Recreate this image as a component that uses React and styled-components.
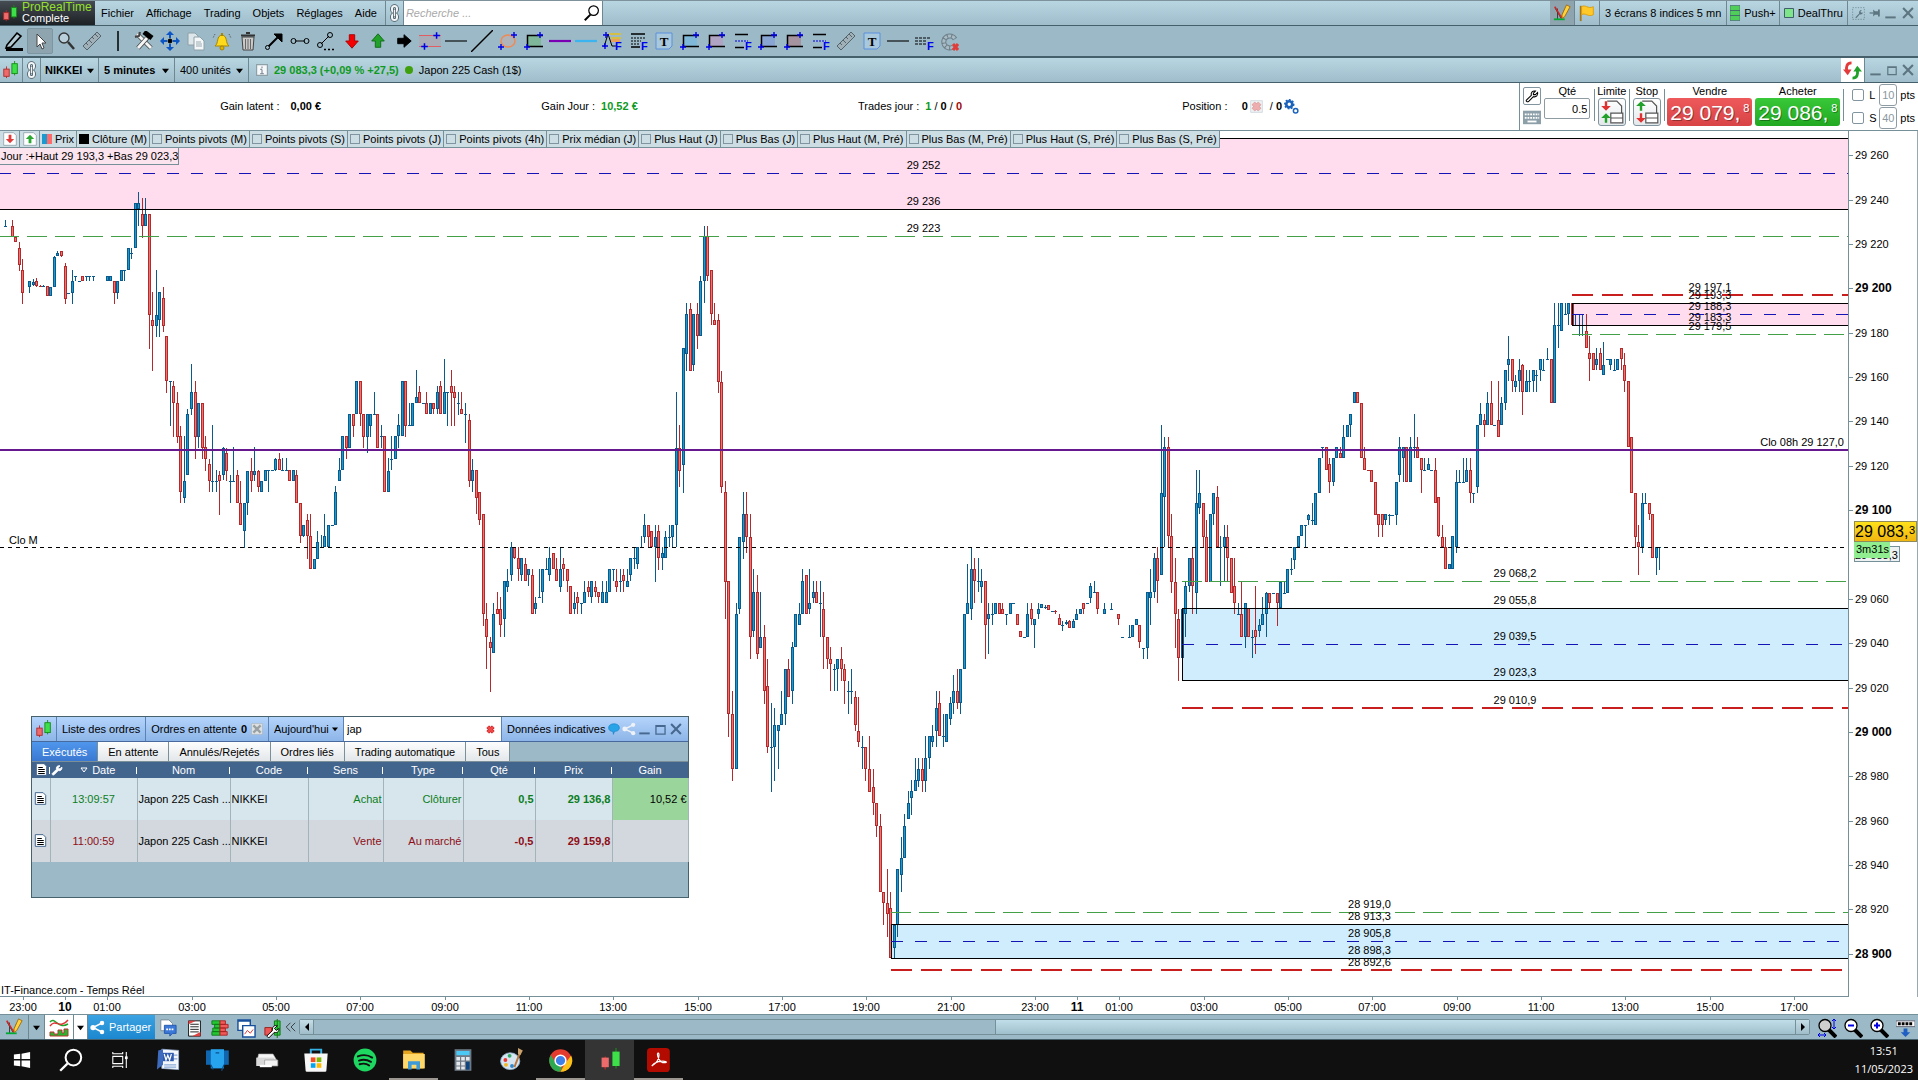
import React, { useState } from "react";
import styled, { createGlobalStyle } from "styled-components";

const GlobalStyle = createGlobalStyle`
  * {
    box-sizing: border-box;
  }
  body {
    margin: 0;
    background: #fff;
  }
  body, button, input, select, table {
    font-family: "Liberation Sans", Arial, sans-serif;
    font-size: 11px;
    color: #000;
  }
  button, input, select {
    margin: 0;
    padding: 0;
    border: 0;
    border-radius: 0;
    background: none;
    outline: none;
  }
`;

/* ---------- chart data ---------- */

// One bar: u/d (up or down) then high, body top, body bottom, low.
// A single number is a flat bar, "." is a missing one. Values are thirds of a pixel under "top".
const SESSIONS = [
  {
    start: 0,
    top: 49,
    bars: `u120,138,138,138 . d120,138,172,172 d172,172,187,187 d187,205,254,272 d237,270,338,371 . u303,303,322,338
    u297,306,314,318 d293,303,318,322 d316,317,317,322 u316,317,319,319 d317,317,347,347 u322,322,347,347 u228,232,322,322
    u214,220,227,227 d213,213,227,230 d250,259,356,371 u338 u270,303,338,371 u287,288,288,303 u304 d287,287,303,303
    u287,288,288,303 u287,288,288,303 u287,288,288,303 . . . u287,287,303,303 u287,287,303,303 d303,303,338,371
    u303,303,338,356 u271,271,303,303 u270,271,271,303 u205,205,271,271 u205,219,219,238 u70,70,205,205 u37,70,87,138
    d54,102,138,173 u54,102,138,138 d102,102,404,506 d337,420,437,572 u270,404,437,470 u336,337,420,470 d321,354,437,456
    d468,468,604,638 u604,604,604,738 d604,618,670,770 d636,670,770,788 d738,768,937,970 u768,904,953,970 u688,702,886,886
    u552,636,688,704 d604,637,770,836 u670,670,770,803 d670,670,803,836 d768,802,836,872 d836,853,904,937 u736,904,904,937
    u870,904,904,937 d872,886,904,1005 u800,803,886,900 d803,820,872,904 u886,904,904,970 u802,904,904,904 d870,886,970,970
    d903,970,1036,1036 u970,970,1054,1103 u872,872,970,1005 d834,872,904,937 u802,872,886,904 d870,872,920,937
    u904,904,937,937 u870,870,904,904 u870,870,870,937 u870 u834,836,870,872 d820,836,870,870 u834,870,870,870
    u834,870,870,870 d870,870,904,904 u870,870,904,904 d870,886,970,970 d970,970,1069,1088 u1036,1036,1069,1070
    d1003,1020,1069,1136 d1003,1069,1168,1168 u1136,1136,1168,1168 u1053,1086,1136,1136 u1066,1102,1102,1102
    u1003,1069,1102,1102 u1036,1036,1102,1102 u1036 u918,937,1036,1036 u834,870,904,904 u768,768,870,870 d768,768,803,836
    u702,702,803,803 d702,702,738,770 u604,604,702,702 d604,604,702,738 d702,702,770,803 u702,702,770,820 u702,702,738,770
    u636,702,702,702 d702,702,803,803 u736,768,768,803 d768,768,937,937 u834,872,937,937 u768,836,836,870 u768,768,836,836
    u702,736,768,803 u604,604,768,768 d604,604,738,770 u668,736,736,738 u670,670,738,738 u570,652,670,670 d618,636,670,670
    u670 d636,670,702,702 u670,670,702,702 d670,670,688,702 u618,636,688,702 d604,618,702,702 u537,636,702,702
    u636,636,636,738 d570,618,638,738 d618,637,653,738 u636,670,670,704 d637,688,702,702 u668,702,702,788 d702,720,904,920
    u836,870,904,937 d870,870,953,1003 d937,937,1020,1036 d1003,1003,1303,1338 d1268,1318,1370,1468 d1370,1387,1403,1535
    u1268,1303,1420,1420 d1236,1286,1303,1303 d1252,1286,1336,1370 u1203,1203,1318,1370 u1168,1203,1220,1236
    u1086,1102,1186,1203 d1102,1102,1135,1136 d1102,1135,1168,1203 u1135,1135,1186,1203 d1135,1152,1203,1203
    u1168,1168,1186,1218 d1168,1186,1303,1303 u1252,1270,1286,1303 u1168,1252,1252,1252 u1168,1168,1236,1270
    u1135,1168,1168,1168 u1102,1135,1186,1203 d1118,1120,1168,1168 d1135,1168,1203,1203 u1102,1168,1220,1236
    d1135,1152,1168,1203 d1168,1168,1203,1236 d1218,1218,1303,1303 u1236,1270,1286,1303 d1236,1252,1270,1303
    u1270,1270,1270,1303 u1203,1236,1270,1270 d1203,1220,1236,1252 u1203,1203,1252,1268 d1203,1220,1236,1252
    d1236,1236,1252,1270 u1203,1236,1270,1270 u1203,1236,1270,1270 u1168,1168,1236,1236 u1168,1168,1168,1203
    d1168,1203,1220,1236 u1168,1203,1203,1236 d1168,1186,1203,1236 u1168,1203,1220,1220 u1135,1135,1186,1203
    u1102,1135,1135,1168 u1102,1102,1152,1168`,
  },
  {
    start: 181,
    top: 319,
    bars: `u258,292,292,292 u192,226,260,278 d226,226,260,292 d244,244,292,292 u226,260,292,395 d226,244,325,360
    u292,310,325,360 u244,260,325,325 u226,260,260,292 u226,226,260,292 u-174,-7,226,292 d-75,-7,62,110 u-305,-305,44,128
    u-441,-407,-289,-238 d-441,-423,-238,-238 u-407,-407,-256,-238 d-441,-407,-341,-304 u-523,-507,-341,-341
    u-672,-641,-507,-440 d-672,-641,-523,-507 d-540,-540,-407,-374 d-441,-390,-374,-374 d-407,-390,-205,-171
    d-238,-205,110,128 d94,127,395,508 d394,394,793,860 d724,793,958,992 u460,493,958,958 u260,260,476,493
    u127,192,277,326 d127,192,260,310 d192,260,560,627 u358,427,542,560 d376,427,611,627 u427,560,593,593
    d526,560,724,761 d626,709,892,908 u760,892,892,1025 u775,826,892,992 u826,826,842,958 u724,793,826,826
    u658,658,793,826 d626,658,742,742 u577,592,724,761 u493,493,592,592 u460,493,526,526 u358,394,493,493
    d376,376,493,493 u358,460,476,493 u394,427,443,460 d394,427,460,460 u394,460,460,560 d427,476,560,658
    d560,560,626,658 d592,626,643,724 u643,658,658,724 u626,626,658,724 d592,626,658,692 d643,658,692,761
    u692,724,724,793 u658,724,724,761 d724,742,826,842 d742,842,875,892 u858,892,892,958 d892,892,958,992
    d858,958,1025,1025 d958,1010,1058,1094 d1058,1058,1127,1160 d1092,1127,1325,1325 d1325,1325,1358,1424
    d1258,1358,1391,1460 d1325,1375,1525,1525 u1424,1424,1493,1525 u1258,1258,1424,1460 u1160,1225,1276,1325
    u1092,1127,1225,1225 u1024,1058,1108,1108 u990,1024,1043,1094 u925,990,1024,1024 u925,958,992,1010 d925,958,992,1025
    u858,925,992,1025 u858,858,925,958 u825,858,875,892 u724,775,842,892 d724,760,858,858 u793,858,858,892
    u793,793,875,875 u742,760,808,826 u675,724,760,793 d658,724,760,777 u658,658,760,793 u493,493,658,658
    u342,460,493,493 u292,358,476,510 d325,358,394,460 u325,394,394,427 u358,394,410,460 d394,394,526,626
    u460,493,508,611 u460,493,493,526 u460,460,493,493 d460,460,493,493 d460,476,493,493 u493,493,493,526
    u460,460,493,493 u460 d493,493,526,526 d542,542,560,560 u560 u460,493,560,560 d460,476,508,526 u508,508,526,593
    u460,476,493,508 u463,463,474,474 u466,470,470,476 d466,466,480,480 u482 d480,482,486,492 d493,504,526,526
    u514,524,524,542 u510,517,521,524 d510,514,535,535 u508,514,535,535 u476,493,510,510 u476,476,493,493
    d460,460,476,493 u460 u400,409,443,460 u394,427,427,427 d427,427,476,493 . u460,476,493,493 . u460,476,476,476 .
    d493,493,508,526 u560 . u526,560,560,560 u526,526,560,560 u508,508,526,526 d526,526,576,593 u593,593,593,626
    u427,427,593,626 u358,427,443,526 u310,325,427,443 d292,325,394,460`,
  },
  {
    start: 329,
    top: 129,
    bars: `u495,698,945,945 u530,562,712,860 d530,562,828,860 d762,828,965,998 d895,965,1063,1163 d1046,1078,1195,1262
    u1046,1046,1195,1195 u965,978,1063,1130 u895,895,978,996 d860,895,978,1063 u630,730,998,1063 u630,698,745,762
    d730,730,830,860 d780,830,965,965 u762,762,965,965 u698,698,762,795 d678,712,862,862 u828,862,862,978
    u796,830,862,965 d796,830,895,965 d895,895,998,998 d895,978,1030,1063 u1030,1063,1063,1063 d965,1063,1130,1130
    u1030,1030,1130,1163 d1045,1045,1130,1130 u1110,1130,1130,1195 d978,1110,1130,1182 u1078,1096,1112,1130
    u1012,1063,1096,1096 u996,998,1063,1130 d998,998,1030,1046 u998 d998,998,1030,1098 u965,965,1045,1045
    u965,998,998,998 u928,928,998,998 u895,928,928,945 u862,862,900,928 u828,828,862,862 u796,796,828,828
    u796,796,796,860 u762,764,780,796 u730,780,780,796 u698,698,796,796 u595,595,698,698 u562,562,562,595
    d562,562,630,630 d595,612,665,698 u595,595,665,678 u562,562,595,595 d562,580,595,595 u495,530,595,595
    u495,495,530,530 u462,462,495,530 u397,397,430,430 d397,397,430,430 d430,430,595,595 d562,595,630,630 d630
    d630,630,665,665 d665,665,765,765 d762,762,796,830 d762,762,796,830 u762,762,780,796 u762,764,764,796 u764
    u665,665,764,796 u530,562,645,665 u562,562,595,665 d562,562,665,665 u530,562,665,665 u462,562,562,595
    d530,562,595,595 d595,595,630,698 u595,630,630,630 u595,612,630,630 u630 d595,630,730,730 d712,712,828,830
    d796,830,862,862 d830,862,928,928 u912,912,928,928 u828,828,928,928 u630,665,862,880 u630,665,665,665
    u595,665,665,665 u595,630,665,665 d595,630,698,730 u698,698,698,730 u495,495,680,698 u430,462,495,495
    d462,480,495,530 u397,430,495,495 d362,430,495,495 u495 d362,480,530,530 u412,430,495,495 u330,330,430,450
    u228,298,314,364 d298,298,364,397 u345,364,380,397 u298,330,364,397 d312,314,397,464 u330,364,397,397
    u330,364,364,397 u330,330,364,397 u330,345,345,397 u298,298,330,364 u298,330,330,330 u265,298,298,298
    d298,298,430,430 u130,195,430,430 u130,195,195,265 u130,130,214,214 u130,163,163,163 u130,130,163,195
    d130,130,195,195 u163,163,163,195 u163,163,163,228 u163,195,195,228 d163,214,265,265 d228,280,298,364
    d280,280,330,330 u265,298,314,330 d265,280,330,330 u247,314,345,345 u298 u298,298,314,330 u298,330,330,330
    u298,298,330,330 d265,265,298,330 d280,314,364,397 d364,364,562,562 d530,530,698,698 d698,698,830,862
    d796,846,862,946 u698,730,862,880 u698,730,730,730 d730,730,762,780 d762,762,895,895 u862,862,895,946
    u862,862,862,930`,
  },
];

const BAR_STEP = 3.513;

const CANDLES = SESSIONS.flatMap(({ start, top, bars }) =>
  bars
    .split(/\s+/)
    .map((bar, i) => {
      if (bar === ".") return null;
      const v = bar.slice(1).split(",").map((n) => Math.round(top + Number(n) / 3));
      const [high, open, close, low] = v.length === 1 ? [v[0], v[0], v[0], v[0]] : v;
      return { x: Math.round(4.8 + (start + i) * BAR_STEP), up: bar[0] === "u", high, open, close, low };
    })
    .filter(Boolean)
);

const priceY = (p) => Math.round(24.3 + (29260 - p) * 2.218);
const priceText = (p) => {
  const [int, dec] = String(p).split(".");
  return `${int.slice(0, 2)} ${int.slice(2)}${dec ? "," + dec : ""}`;
};

const ZONES = [
  { x: 0, top: 29268, bottom: 29235.6, fill: "#ffdcee" },
  { x: 1572, top: 29193.3, bottom: 29183.3, fill: "#ffdcee", side: true },
  { x: 1182, top: 29055.8, bottom: 29023.3, fill: "#cfedfd", side: true },
  { x: 891, top: 28913.3, bottom: 28898.3, fill: "#cfedfd", side: true },
];

const LINES = {
  green: { stroke: "#43a047", strokeWidth: 1, strokeDasharray: "20 8" },
  blue: { stroke: "#1414b4", strokeWidth: 1, strokeDasharray: "12 12" },
  red: { stroke: "#c81e1e", strokeWidth: 2, strokeDasharray: "21 9" },
};

const LEVELS = [
  { x: -1, price: 29252, kind: "blue" },
  { x: -1, price: 29236 },
  { x: -1, price: 29223.4, label: "29 223", kind: "green" },
  { x: 1572, price: 29197.1, kind: "red" },
  { x: 1572, price: 29193.3 },
  { x: 1572, price: 29188.3, kind: "blue" },
  { x: 1572, price: 29183.3 },
  { x: 1572, price: 29179.5, kind: "green" },
  { x: 1182, price: 29068.2, kind: "green" },
  { x: 1182, price: 29055.8 },
  { x: 1182, price: 29039.5, kind: "blue" },
  { x: 1182, price: 29023.3 },
  { x: 1182, price: 29010.9, kind: "red" },
  { x: 891, price: 28919, label: "28 919,0", kind: "green" },
  { x: 891, price: 28913.3 },
  { x: 891, price: 28905.8, kind: "blue" },
  { x: 891, price: 28898.3 },
  { x: 891, price: 28892.6, kind: "red" },
];

const PRICES = Array.from({ length: 19 }, (_, i) => 29260 - i * 20).filter((p) => p !== 29080);

const HOURS = Array.from({ length: 22 }, (_, i) => ({
  x: Math.round(23 + i * 84.33),
  label: `${String((23 + i * 2) % 24).padStart(2, "0")}:00`,
}));
const DAYS = [
  { x: 65, label: "10" },
  { x: 1077, label: "11" },
];

const INDICATORS = [
  "Points pivots (M)",
  "Points pivots (S)",
  "Points pivots (J)",
  "Points pivots (4h)",
  "Prix médian (J)",
  "Plus Haut (J)",
  "Plus Bas (J)",
  "Plus Haut (M, Pré)",
  "Plus Bas (M, Pré)",
  "Plus Haut (S, Pré)",
  "Plus Bas (S, Pré)",
];

/* ---------- layout ---------- */

const Screen = styled.div`
  display: flex;
  flex-direction: column;
  min-height: 100vh;
  overflow: hidden;
`;

const Bar = styled.div`
  display: flex;
  align-items: stretch;
  height: ${(p) => p.$h}px;
  background: linear-gradient(#b8d6e2, #9fbdca);
  border-top: ${(p) => (p.$top ? "1px solid #7d929b" : "0")};
  border-bottom: ${(p) => p.$line || 1}px solid #46606b;
`;

const Tools = styled(Bar)`
  padding-left: 1px;
  align-items: center;
  background: #9bb9c6;
`;

const Push = styled.div`
  flex: 1;
`;

const Cell = styled.div`
  display: flex;
  align-items: center;
  gap: ${(p) => p.$gap || 0}px;
  padding: 0 ${(p) => (p.$pad === undefined ? 5 : p.$pad)}px;
  border-right: 1px solid #6f8791;
  white-space: nowrap;
  background: ${(p) => p.$bg || "none"};
`;

const CellButton = styled(Cell).attrs({ as: "button", type: "button" })``;

const Logo = styled.div`
  display: flex;
  align-items: center;
  gap: 3px;
  width: 95px;
  padding-left: 2px;
  background: linear-gradient(#454c52, #1c2125);
  color: #fff;
  line-height: 11px;
  white-space: nowrap;
`;

const Brand = styled.span`
  display: block;
  font-size: 12px;
  color: #95e02c;
`;

const Menu = styled.nav`
  display: flex;
  padding-right: 2px;
  border-right: 1px solid #6f8791;
`;

const MenuItem = styled.button`
  padding: 0 6px;
`;

const Search = styled.label`
  display: flex;
  align-items: center;
  width: 199px;
  padding: 0 2px;
  background: #fff;
  border-right: 1px solid #6f8791;
`;

const SearchInput = styled.input`
  flex: 1;
  min-width: 0;
  &::placeholder {
    color: #a9a9a9;
    font-style: italic;
  }
`;

const ToolButton = styled.button`
  display: flex;
  align-items: center;
  justify-content: center;
  flex: none;
  width: 26px;
  height: 26px;
  border: 1px solid ${(p) => (p.$on ? "#7c96a2" : "transparent")};
  border-radius: 2px;
  background: ${(p) => (p.$on ? "#8ea5b0" : "none")};
`;

const PlainButton = styled.button`
  display: inline-flex;
  align-items: center;
  justify-content: center;
  width: ${(p) => p.$w || 16}px;
`;

const Picker = styled.select`
  appearance: none;
  font-weight: ${(p) => (p.$bold ? "bold" : "normal")};
`;

const Quote = styled.div`
  display: flex;
  align-items: center;
  gap: 6px;
  padding-left: 7px;
  white-space: nowrap;
  b {
    color: #0f9a1e;
  }
`;

const Dot = styled.i`
  width: 8px;
  height: 8px;
  border-radius: 50%;
  background: #3fa00c;
`;

const Info = styled.section`
  display: flex;
  height: 48px;
  border-bottom: 1px solid #76909a;
`;

const Stats = styled.div`
  display: flex;
  flex: 1;
  align-items: center;
  justify-content: space-evenly;
  padding-bottom: 1px;
  border-right: 1px solid #76909a;
`;

const Stat = styled.div`
  display: flex;
  align-items: center;
  gap: ${(p) => p.$gap || 6}px;
`;

const Green = styled.b`
  color: #0f9a1e;
`;

const DarkRed = styled.b`
  color: #a00a0a;
`;

const Ticket = styled.div`
  display: flex;
  padding: 0 3px;
`;

const TicketSide = styled.div`
  display: flex;
  flex-direction: column;
  gap: 3px;
  padding-top: 4px;
  margin-right: 3px;
`;

const SideButton = styled.button`
  display: flex;
  align-items: center;
  justify-content: center;
  width: 18px;
  height: 18px;
  border: ${(p) => (p.$flat ? "0" : "1px solid #8195a0")};
  border-radius: 2px;
`;

const Field = styled.label`
  display: flex;
  flex-direction: column;
  align-items: center;
  padding-top: 1px;
  margin-right: 4px;
  line-height: 14px;
`;

const QtyInput = styled.input`
  width: 46px;
  height: 21px;
  padding-right: 2px;
  border: 1px solid #8f9ba3;
  border-radius: 2px;
  text-align: right;
`;

const OrderGroup = styled.div`
  display: flex;
  flex-direction: column;
  align-items: center;
  width: 35px;
  padding-top: 1px;
  line-height: 14px;
  background: linear-gradient(#76909a, #76909a) left 6px / 1px 32px no-repeat;
`;

const OrderButton = styled.button`
  display: flex;
  align-items: center;
  justify-content: center;
  width: 28px;
  height: 28px;
  border: 1px solid #8195a0;
  border-radius: 3px;
  background: linear-gradient(#fff, #e3e8ea);
`;

const Deals = styled.div`
  display: flex;
  gap: 3px;
  padding: 1px 3px 0;
  line-height: 14px;
  background: linear-gradient(#76909a, #76909a) left 6px / 1px 32px no-repeat;
`;

const Deal = styled.div`
  display: flex;
  flex-direction: column;
  align-items: center;
`;

const DealButton = styled.button`
  display: flex;
  align-items: flex-start;
  justify-content: space-between;
  width: 85px;
  height: 28px;
  padding: 1px 3px 0;
  border-radius: 3px;
  background: ${(p) => (p.$buy ? "linear-gradient(#38c838, #22a922)" : "linear-gradient(#ee5a5c, #d84446)")};
  color: #fff;
  font-size: 21px;
  line-height: 27px;
  text-shadow: 1px 1px 0 rgba(0, 0, 0, 0.35);
  small {
    font-size: 11px;
    line-height: 18px;
  }
`;

const Guards = styled.div`
  display: flex;
  flex-direction: column;
  gap: 1px;
  padding-top: 1px;
  padding-left: 9px;
  background: linear-gradient(#76909a, #76909a) left 6px / 1px 32px no-repeat;
`;

const Guard = styled.div`
  display: flex;
  align-items: center;
  gap: 3px;
  label {
    display: flex;
    align-items: center;
    gap: 5px;
    width: 24px;
  }
`;

const Tick = styled.input`
  appearance: none;
  flex: none;
  width: ${(p) => p.$s}px;
  height: ${(p) => p.$s}px;
  border: 1px solid #8195a0;
  border-radius: ${(p) => p.$r || 0}px;
`;

const PtsInput = styled.input`
  width: 18px;
  height: 22px;
  border: 1px solid #8f9ba3;
  border-radius: 3px;
  color: #8b98a0;
  text-align: center;
`;

const Chart = styled.main`
  position: relative;
  display: grid;
  grid-template-columns: 1fr 69px;
  grid-template-rows: 1fr 17px;
  flex: 1;
  min-height: 780px;
`;

const Plot = styled.svg`
  display: block;
  width: 100%;
  height: 100%;
  min-width: 0;
  overflow: hidden;
  border-right: 1px solid #76909a;
  border-bottom: 1px solid #76909a;
  font-size: 11px;
`;

const PriceAxis = styled.svg`
  display: block;
  width: 100%;
  height: 100%;
  font-size: 11px;
`;

const TimeAxis = styled.svg`
  grid-column: 1 / 3;
  display: block;
  width: 100%;
  height: 100%;
  font-size: 11px;
`;

const Overlay = styled.div`
  position: absolute;
  top: 0;
  left: 0;
`;

const Strip = styled.div`
  display: flex;
  height: 17px;
  border-bottom: 1px solid #76909a;
  background: #cddde4;
`;

const StripItem = styled.label`
  display: flex;
  align-items: center;
  gap: 3px;
  padding: 0 2px;
  border-right: 1px solid #76909a;
  white-space: nowrap;
`;

const StripButton = styled.button`
  display: flex;
  align-items: center;
  justify-content: center;
  width: 20px;
  border-right: 1px solid #76909a;
`;

const Swatch = styled.i`
  width: 10px;
  height: 10px;
  background: ${(p) => p.$c};
`;

const DayRange = styled.div`
  width: 179px;
  padding-left: 1px;
  line-height: 16px;
  border: solid #76909a;
  border-width: 0 1px 1px 0;
  background: #fbe4ee;
  white-space: nowrap;
`;

/* ---------- orders window ---------- */

const Orders = styled.section`
  position: absolute;
  left: 31px;
  top: 585px;
  width: 658px;
  height: 182px;
  border: 1px solid #48626d;
  background: #9bb9c6;
`;

const OrdersTitle = styled.header`
  display: flex;
  height: 25px;
  border-bottom: 1px solid #47699c;
  background: linear-gradient(#b4d4fb, #8db5e8);
`;

const OrdersCell = styled.div`
  display: flex;
  align-items: center;
  gap: ${(p) => p.$gap || 0}px;
  padding: 0 ${(p) => (p.$pad === undefined ? 5 : p.$pad)}px;
  border-right: 1px solid #5b82b5;
  white-space: nowrap;
`;

const FilterBox = styled.div`
  display: flex;
  align-items: center;
  width: 158px;
  padding: 0 3px;
  background: #fff;
  border-right: 1px solid #5b82b5;
`;

const WindowButtons = styled.div`
  display: flex;
  align-items: center;
  justify-content: space-between;
  flex: 1;
  padding: 0 5px;
  white-space: nowrap;
`;

const Tabs = styled.div`
  display: flex;
  height: 20px;
  border-bottom: 1px solid #7b8f99;
`;

const Tab = styled.button`
  padding: 0 10px;
  border-right: 1px solid #7b8f99;
  background: ${(p) => (p.$on ? "linear-gradient(#4f97ec, #3a78d2)" : "linear-gradient(#fdfdfd, #e3e7ea)")};
  color: ${(p) => (p.$on ? "#fff" : "#000")};
`;

const OrdersTable = styled.table`
  width: 100%;
  table-layout: fixed;
  border-collapse: collapse;
  th, td {
    padding: 0 1px;
    overflow: hidden;
    white-space: nowrap;
  }
  th {
    height: 16px;
    background: linear-gradient(#fff, #fff) right 5px / 1px 7px no-repeat #42658e;
    color: #fff;
    font-weight: normal;
  }
  th:last-child {
    background: #42658e;
  }
  td {
    height: 42px;
    border-right: 1px solid #a3b3ba;
    text-align: right;
  }
`;

const DateHead = styled.span`
  display: flex;
  align-items: center;
  gap: 4px;
`;

const OrderRow = styled.tr`
  background: ${(p) => (p.$buy ? "#d7e6ec" : "#d2d8de")};
  color: ${(p) => (p.$buy ? "#0b7d22" : "#8f0d17")};
`;

const Dark = styled.td`
  && {
    color: #000;
    text-align: left;
  }
`;

const GainCell = styled.td`
  && {
    color: #000;
    background: ${(p) => (p.$on ? "#9ad59b" : "none")};
  }
`;

const Centered = styled.td`
  && {
    text-align: center;
  }
`;

/* ---------- bottom ---------- */

const BottomBar = styled(Bar)`
  background: #9bb9c6;
  border-top: 1px solid #76909a;
`;

const Share = styled.button`
  display: flex;
  align-items: center;
  gap: 4px;
  width: 67px;
  padding-left: 2px;
  background: linear-gradient(#3ba3e2, #1c87cf);
  color: #fff;
`;

const Scroll = styled.div`
  display: flex;
  flex: 1;
  height: 16px;
  margin: 4px 4px 0 2px;
  border: 1px solid #76909a;
  border-radius: 2px;
`;

const ScrollButton = styled.button`
  display: flex;
  align-items: center;
  justify-content: center;
  width: 14px;
  background: linear-gradient(#c5dde6, #9fbdca);
  border: solid #76909a;
  border-width: 0 ${(p) => (p.$end ? 0 : 1)}px 0 ${(p) => (p.$end ? 1 : 0)}px;
`;

const Track = styled.div`
  display: flex;
  justify-content: flex-end;
  flex: 1;
`;

const Thumb = styled.div`
  width: 54%;
  border-left: 1px solid #76909a;
  background: linear-gradient(#c0dee9, #a0c0cd);
`;

const Taskbar = styled.footer`
  display: flex;
  height: 40px;
  margin-left: -3px;
  padding-right: 5px;
  background: #101010;
`;

const TaskButton = styled.button`
  display: flex;
  align-items: center;
  justify-content: center;
  flex: none;
  width: 49px;
  background: ${(p) => (p.$on ? "#343434" : "none")};
  box-shadow: ${(p) => (p.$open ? "inset 0 -2px #9c9690" : "none")};
`;

const Clock = styled.time`
  color: #fff;
  font-family: "Open Sans", "Noto Sans", sans-serif;
  font-size: 11px;
  line-height: 18px;
  padding-top: 2px;
  text-align: center;
`;

/* ---------- icons ---------- */

const Icon = ({ s = 20, h, box = 20, children }) => (
  <svg width={s} height={h || s} viewBox={`0 0 ${box} ${box}`} fill="none" stroke="#000" aria-hidden="true">
    {children}
  </svg>
);

const CandleLogo = ({ s = 18 }) => (
  <Icon s={s}>
    <path d="M5 6v13" stroke="#c22" />
    <rect x="2" y="9" width="6" height="8" fill="#ef6b6b" stroke="#b02a2a" />
    <path d="M14 0v16" stroke="#158a15" />
    <rect x="11" y="3" width="6" height="11" fill="#3ee04a" stroke="#158a15" />
  </Icon>
);

const Chain = () => (
  <svg width="11" height="18" viewBox="0 0 11 18" fill="none" aria-hidden="true">
    <g stroke="#46555c" strokeWidth="3.6">
      <rect x="3" y="2" width="5" height="6" rx="2.5" />
      <rect x="3" y="10" width="5" height="6" rx="2.5" />
    </g>
    <g stroke="#f2f6f8" strokeWidth="2">
      <rect x="3" y="2" width="5" height="6" rx="2.5" />
      <rect x="3" y="10" width="5" height="6" rx="2.5" />
    </g>
    <path d="M5.5 5v8" stroke="#46555c" strokeWidth="3" />
    <path d="M5.5 5.500v7" stroke="#f2f6f8" strokeWidth="1.5" />
  </svg>
);

const Down = ({ s = 7 }) => (
  <Icon s={s} box={8}>
    <path d="M0 2h8L4 7z" fill="#000" stroke="none" />
  </Icon>
);

const Minimize = ({ c = "#5d7580" }) => (
  <Icon s={13}>
    <path d="M2 16h16" stroke={c} strokeWidth="3" />
  </Icon>
);
const Maximize = ({ c = "#5d7580" }) => (
  <Icon s={13}>
    <path d="M3 4h14v13H3zM3 5h14" stroke={c} strokeWidth="2" />
  </Icon>
);
const Close = ({ c = "#5d7580" }) => (
  <Icon s={14}>
    <path d="M3 3l14 14M17 3L3 17" stroke={c} strokeWidth="3" />
  </Icon>
);

const RedCross = ({ s = 11, dim }) => (
  <Icon s={s}>
    {dim && <path d="M1 1h18v18H1z" fill="#eef3f5" stroke="#c3ced3" />}
    <g opacity={dim ? 0.4 : 1}>
      <path d="M5 5l10 10M15 5L5 15" stroke="#a81414" strokeWidth="7" />
      <path d="M5 5l10 10M15 5L5 15" stroke="#f04848" strokeWidth="5" />
    </g>
  </Icon>
);

const DrawIcon = () => (
  <Icon s={18}>
    <path d="M2 4l7 12 4-10M5 5v12" stroke="#333" />
    <path d="M2 3l8 13" stroke="#d22" strokeWidth="1.6" />
    <path d="M1 17h12" stroke="#0a3" strokeWidth="2" />
    <path d="M10 12l5-11 4 2-6 11-3 2z" fill="#ffd23c" stroke="#a36a10" />
  </Icon>
);

const Flag = () => (
  <Icon s={18}>
    <path d="M3 2v17" stroke="#a5761c" strokeWidth="2" />
    <path d="M4 3c4-3 7 3 13 0v9c-6 3-9-3-13 0z" fill="#ffc928" stroke="#d99b0b" />
  </Icon>
);

const Pages = () => (
  <Icon s={13}>
    <path d="M2 1h12l4 4v14H2z" fill="#fff" stroke="#42658e" strokeWidth="1.5" />
    <path d="M5 7h7M5 10h10M5 13h10M5 16h10" stroke="#000" strokeWidth="1.6" />
  </Icon>
);

const Wrench = ({ c = "#000", f = "none", s = 14 }) => (
  <Icon s={s}>
    <path
      d="M2 16l7-7c-1-4 2-7 6-6l-3 3v2h3l3-3c1 4-2 7-6 6l-7 7c-2 1-4-1-3-2z"
      stroke={c}
      fill={f}
      strokeWidth="1.5"
    />
  </Icon>
);

const ShareGlyph = ({ c = "#fff", s = 16 }) => (
  <Icon s={s}>
    <path d="M16 4L4 10l12 6" stroke={c} strokeWidth="2" />
    <g fill={c} stroke="none">
      <circle cx="4" cy="10" r="3.5" />
      <circle cx="16" cy="4" r="3" />
      <circle cx="16" cy="16" r="3" />
    </g>
  </Icon>
);

const plus = (x, y) => <path d={`M${x - 3} ${y}h6M${x} ${y - 3}v6`} stroke="#0000e6" strokeWidth="1.4" />;

const Letter = ({ x = 13, y = 19 }) => (
  <text x={x} y={y} fontSize="11" fontWeight="bold" fill="#0000f0" stroke="none">
    F
  </text>
);

const RectTool = ({ fill }) => (
  <Icon>
    <path d="M3 5h14v11H3z" fill={fill} stroke="none" />
    <path d="M19 4.500H3.500v11H19" stroke="#000" strokeWidth="1.5" />
    {plus(16, 4)}
    {plus(3, 16)}
  </Icon>
);

const RulerTool = () => (
  <Icon>
    <path d="M1 15L15 1l4 4L5 19z" fill="#9fb0b8" stroke="#55636b" />
    <path d="M4 12l2 2M7 9l3 3M10 6l2 2M13 3l3 3" stroke="#55636b" />
  </Icon>
);

const TextTool = () => (
  <Icon>
    <path d="M2 2h16v13l-3 3H2z" fill="#a9c8dc" stroke="#5b8fe0" />
    <text x="10" y="15" textAnchor="middle" fontSize="13" fontWeight="bold" fontFamily="Liberation Serif, serif" fill="#000" stroke="none">
      T
    </text>
  </Icon>
);

const LevelTool = () => (
  <Icon>
    <path d="M3 3.500h13M3 16.500h9" strokeWidth="1.5" />
    <path d="M3 10h13" stroke="#00d" strokeDasharray="2 1" />
    <Letter />
  </Icon>
);

const LineTool = ({ c = "#000", w = 1 }) => (
  <Icon s={22}>
    <path d="M0 10h20" stroke={c} strokeWidth={w} />
  </Icon>
);

const BlockArrow = ({ turn, fill, stroke }) => (
  <Icon s={18}>
    <path d="M7 3h6v7h4l-7 8-7-8h4z" fill={fill} stroke={stroke} transform={`rotate(${turn} 10 10)`} />
  </Icon>
);

const TOOLS = [
  ["Crayon", <Icon><path d="M3 14L13 2l4 3L7 16l-5 1z" strokeWidth="1.6" fill="#b4cad4" /><path d="M2 18.500h17" strokeWidth="3" /></Icon>],
  ["Pointeur", <Icon><path d="M7 3v13l3-3 2 5 2-1-2-5h4z" fill="#fff" stroke="#444" /></Icon>],
  ["Loupe", <Icon><circle cx="8" cy="7" r="5" fill="#b9d0da" stroke="#333" strokeWidth="1.3" /><path d="M12 11l6 7" stroke="#333" strokeWidth="2.500" /></Icon>],
  ["Règle", <RulerTool />],
  ["Séparateur", <Icon><path d="M10 0v20" strokeWidth="1.5" /></Icon>],
  ["Outils", <Icon><path d="M3 3l14 14" stroke="#444" strokeWidth="4.500" /><path d="M3 3l14 14" stroke="#f5f5f5" strokeWidth="3" /><path d="M15 5L4 17" stroke="#444" strokeWidth="4.500" /><path d="M13 7L4 17" stroke="#f5f5f5" strokeWidth="3" /><path d="M10 1l8 6" strokeWidth="5" /><path d="M1 6l4-1 1-4" stroke="#444" strokeWidth="2" /></Icon>],
  ["Déplacer", <Icon><g fill="#0b55c4" stroke="none"><path d="M10 0l4 4h-3v3H9V4H6zM10 20l4-4h-3v-3H9v3H6zM0 10l4-4v3h3v2H4v3zM20 10l-4-4v3h-3v2h3v3z" /></g><circle cx="10" cy="10" r="2" fill="#000" /></Icon>],
  ["Copier", <Icon><path d="M2 2h7l3 3v9H2z" fill="#dde7eb" stroke="#8ea0a8" /><path d="M8 6h6l4 4v9H8z" fill="#f4f7f8" stroke="#8ea0a8" /><path d="M10 11h5M10 13h6M10 15h6" stroke="#9aa9b0" /></Icon>],
  ["Alerte", <Icon><path d="M3 15c4-3 1-10 7-11 6 1 3 8 7 11z" fill="#ffd91c" stroke="#a88600" /><circle cx="10" cy="17" r="2" fill="#e2b400" stroke="#a88600" /><path d="M10 2v3" stroke="#a88600" strokeWidth="2" /><path d="M3 3L1 7M17 3l2 4" stroke="#555" strokeDasharray="1 1" /></Icon>],
  ["Supprimer", <Icon><path d="M4 6h12l-1 13H5z" fill="#c9c9c9" stroke="#444" /><path d="M7.500 8v10M10 8v10M12.500 8v10" stroke="#666" /><path d="M3 4.500h14M8 2h4" stroke="#333" strokeWidth="2" /></Icon>],
  ["Flèche", <Icon><path d="M3 17L14 6" strokeWidth="2" /><path d="M10 3h8v8z" fill="#000" /><circle cx="3.500" cy="16.500" r="2" fill="#9bb9c6" /></Icon>],
  ["Segment", <Icon><path d="M5 10h10" /><circle cx="3.500" cy="10" r="2.500" /><circle cx="16.500" cy="10" r="2.500" /></Icon>],
  ["Prolongement", <Icon><path d="M5 13l8-8" /><circle cx="14" cy="4" r="2.500" /><circle cx="4" cy="14" r="2.500" /><path d="M8 18.500h11" strokeWidth="1.5" strokeDasharray="2 2" /></Icon>],
  ["Baisse", <BlockArrow turn={0} fill="#f40000" stroke="#a80000" />],
  ["Hausse", <BlockArrow turn={180} fill="#21a02a" stroke="#0d6b14" />],
  ["Suite", <BlockArrow turn={270} fill="#000" stroke="#000" />],
  ["Canal", <Icon s={22}><path d="M0 5h20v10H0z" fill="#a9adb8" stroke="none" /><path d="M0 5h20M0 15h20" stroke="#e05d62" />{plus(16, 5)}{plus(5, 15)}</Icon>],
  ["Ligne", <LineTool />],
  ["Droite", <Icon s={22}><path d="M0 20L20 0" strokeWidth="1.3" /></Icon>],
  ["Ellipse", <Icon><ellipse cx="10" cy="10" rx="7" ry="6" fill="#b0b4b8" stroke="#ee8a55" strokeWidth="1.5" />{plus(16, 4)}{plus(3, 16)}</Icon>],
  ["Rectangle vert", <RectTool fill="#7fb79a" />],
  ["Ligne violette", <LineTool c="#7a00b4" w={2} />],
  ["Ligne bleue", <LineTool c="#3cb4f0" w={2} />],
  ["Fibonacci", <Icon><path d="M7 3h12M9 7h10" stroke="#e8c11a" strokeWidth="1.5" /><path d="M9 8h9v3H9z" fill="#e8a05c" stroke="none" /><path d="M2 16L6 3l4 12h4" />{plus(4, 4)}{plus(3, 15)}<Letter /></Icon>],
  ["Retracement", <Icon><path d="M3 3h14M3 16h9" strokeWidth="1.5" /><path d="M3 7h14M3 10h10M3 13h9" strokeDasharray="2 1" /><Letter /></Icon>],
  ["Texte", <TextTool />],
  ["Zone 1", <RectTool fill="#7fb8d8" />],
  ["Zone 2", <RectTool fill="#b0a4c4" />],
  ["Niveaux 1", <LevelTool />],
  ["Zone 3", <RectTool fill="#88a5d4" />],
  ["Zone 4", <RectTool fill="#a5939f" />],
  ["Niveaux 2", <LevelTool />],
  ["Règle 2", <RulerTool />],
  ["Texte 2", <TextTool />],
  ["Ligne 2", <LineTool />],
  ["Pointillés", <Icon><path d="M1 7h16M1 10h12M1 13h11" strokeDasharray="3 1" /><Letter /></Icon>],
  ["Aimant", <Icon><path d="M13 16A6 6 0 1 1 15 8" stroke="#6d7f88" strokeWidth="5" /><path d="M13 16A6 6 0 1 1 15 8" stroke="#a9bcc5" strokeWidth="3" strokeDasharray="3 1" /><path d="M13 13l5 6M18 13l-5 6" stroke="#e03c3c" strokeWidth="3" /></Icon>],
];

const ZoomIcon = ({ children, fill = "#fff" }) => (
  <Icon>
    <path d="M11 11l8 8" strokeWidth="4" />
    <circle cx="8" cy="7.500" r="6" fill={fill} strokeWidth="1.3" />
    {children}
  </Icon>
);

const TASKS = [
  ["Démarrer", <Icon s={18}><path d="M1 4l7-1v6H1zM9.500 3L19 1v8H9.500zM1 10.500h7V17l-7-1zM9.500 10.500H19V19l-9.500-2z" fill="#fff" stroke="none" /></Icon>],
  ["Rechercher", <Icon s={24}><circle cx="12" cy="8" r="6.500" stroke="#fff" strokeWidth="1.7" /><path d="M7 13l-6 6" stroke="#fff" strokeWidth="1.9" /></Icon>],
  ["Vue des tâches", <Icon s={18}><path d="M2 6h11v8H2zM2 1v2h11V1M2 19v-2h11v2M17 1v18" stroke="#fff" strokeWidth="1.2" /><path d="M15.500 6h3v3h-3z" fill="#fff" stroke="none" /></Icon>],
  ["Word", <Icon s={24}><path d="M4 1l14 1v16L4 17z" fill="#f4f8fd" stroke="#9db6dc" strokeWidth=".6" /><path d="M13 6h4M13 9h4M6 14h10M6 16h10" stroke="#8ba9d8" /><path d="M1 2l4-1v13l-5 4z" fill="#3f6bbd" stroke="none" /><path d="M5 4h9v7H5z" fill="#2f5cb0" stroke="none" /><path d="M6 5l1.500 5L9 6l1.500 4L12 5" stroke="#fff" /></Icon>],
  ["Votre téléphone", <Icon s={24}><path d="M0 2h19v12H0z" fill="#1166b0" stroke="none" /><path d="M4 1h11v16H4z" fill="#27a4ee" stroke="none" /><path d="M8 4h3M15 14l-2 5M4 14l2 4" stroke="#0c4f8d" /></Icon>],
  ["Imprimante", <Icon s={24}><path d="M3 5h12l3 5H2z" fill="#f6f6f6" stroke="#aaa" strokeWidth=".5" /><path d="M1 8h15v7H1z" fill="#d9d9d9" stroke="none" /><path d="M8 10h11v5H8z" fill="#f4f4f4" stroke="#999" strokeWidth=".6" /><path d="M4 15h10" stroke="#fff" strokeWidth="2" /></Icon>],
  ["Store", <Icon s={26}><path d="M6 6V2h8v4" stroke="#35b2e8" strokeWidth="1.5" /><path d="M1 5h18l-1 13a1 1 0 0 1-1 1H3a1 1 0 0 1-1-1z" fill="#f7f7f7" stroke="none" /><path d="M6 8h3.600v3.600H6z" fill="#f25022" stroke="none" /><path d="M10.500 8h3.600v3.600h-3.600z" fill="#7fba00" stroke="none" /><path d="M6 12.500h3.600V16H6z" fill="#00a4ef" stroke="none" /><path d="M10.500 12.500h3.600V16h-3.600z" fill="#ffb900" stroke="none" /></Icon>],
  ["Spotify", <Icon s={24}><circle cx="10" cy="10" r="9.500" fill="#1ed760" stroke="none" /><path d="M4 7c4-1.500 9-1 12 1M5 10.500c3-1 7-.6 10 1M5.500 13.500c3-.8 6-.5 8 1" stroke="#111" strokeWidth="1.6" strokeLinecap="round" /></Icon>],
  ["Explorateur", <Icon s={24}><path d="M1 2h6l2 2h9v13H1z" fill="#e6a51e" stroke="none" /><path d="M1 5h18v12H1z" fill="#ffd869" stroke="none" /><path d="M5 18v-7h10v7h-3v-4H8v4z" fill="#3f9bd8" stroke="none" /></Icon>, "open"],
  ["Calculatrice", <Icon s={24}><path d="M3 1h14v18H3z" fill="#6d7984" stroke="none" /><path d="M4.500 2.500h11v3.500h-11z" fill="#4cc8f4" stroke="none" /><g fill="#e4e8ec" stroke="none"><path d="M4.500 7.500h3v3h-3zM8.500 7.500h3v3h-3zM12.500 7.500h3v3h-3zM4.500 11.500h3v3h-3zM8.500 11.500h3v3h-3zM4.500 15.500h3v2.500h-3zM8.500 15.500h3v2.500h-3z" /></g><path d="M12.500 11.500h3V18h-3z" fill="#10457f" stroke="none" /></Icon>],
  ["Paint", <Icon s={24}><ellipse cx="8.500" cy="11" rx="8" ry="7" fill="#d5e5f2" stroke="#8fb0cc" strokeWidth=".7" /><g stroke="none"><circle cx="4.500" cy="10" r="1.600" fill="#e33" /><circle cx="8" cy="6.500" r="1.600" fill="#3a6" /><circle cx="5" cy="14" r="1.600" fill="#f3b61f" /><circle cx="10" cy="15" r="1.600" fill="#38c" /></g><path d="M17 3l-5 13" stroke="#b8763a" strokeWidth="1.600" /><path d="M15 0l4 2-2 4-2-1z" fill="#caa26b" stroke="none" /></Icon>],
  ["Chrome", <Icon s={25}><circle cx="10" cy="10" r="9" fill="#e33b2e" stroke="none" /><path d="M10 19l4-7 4.500-6A9 9 0 0 1 10 19z" fill="#fbc116" stroke="none" /><path d="M2.200 5.500L6 12l5 3-1 4A9 9 0 0 1 2.200 5.500z" fill="#2da94f" stroke="none" /><circle cx="10" cy="10" r="4.300" fill="#3f7fe8" stroke="#fff" strokeWidth="1.200" /></Icon>, "open"],
  ["ProRealTime", <Icon s={24}><path d="M6 7v11" stroke="#c22" /><path d="M3 8h6v8H3z" fill="#ef6b6b" stroke="none" /><path d="M15 0v17" stroke="#158a15" /><path d="M12 3h6v12h-6z" fill="#3ee04a" stroke="none" /></Icon>, "on"],
  ["Acrobat", <Icon s={24}><rect x="0" y="0" width="19" height="20" rx="3" fill="#b30b00" stroke="none" /><path d="M4 15c4-2 6-6 6-9 0-3-2-2-1 1 1 4 4 6 7 5 1-1-5-2-10 1-2 2-2 2-2 2z" stroke="#fff" /></Icon>, "open"],
];

/* ---------- parts ---------- */

const Candle = ({ x, up, high, open, close, low }) => {
  const edge = up ? "#0b5a8c" : "#b22a2c";
  const body = close - open;
  return (
    <g>
      <rect x={x} y={high} width="1" height={Math.max(1, low - high)} fill={edge} />
      <rect x={x - 1} y={open} width="3" height={Math.max(1, body)} fill={edge} />
      {body > 2 && <rect x={x} y={open + 1} width="1" height={body - 2} fill={up ? "#1b9ad0" : "#f0736f"} />}
    </g>
  );
};

function ChartPlot() {
  return (
    <Plot shapeRendering="crispEdges">
      {ZONES.map((z) => {
        const y1 = priceY(z.top);
        const y2 = priceY(z.bottom);
        return <rect key={z.top} x={z.x} y={y1} width="100%" height={y2 - y1} fill={z.fill} />;
      })}
      {CANDLES.map((c) => (
        <Candle key={c.x} {...c} />
      ))}
      {ZONES.map((z) => {
        const y1 = priceY(z.top) + 0.5;
        const y2 = priceY(z.bottom) + 0.5;
        return (
          <g key={z.top} stroke="#000">
            <line x1={z.x} x2="100%" y1={y1} y2={y1} />
            <line x1={z.x} x2="100%" y1={y2} y2={y2} />
            {z.side && <line x1={z.x + 0.5} x2={z.x + 0.5} y1={y1} y2={y2} />}
          </g>
        );
      })}
      {LEVELS.map((l) => {
        const y = priceY(l.price);
        const lineY = l.kind === "red" ? y : y + 0.5;
        return (
          <g key={l.price}>
            {l.kind && <line x1={l.x} x2="100%" y1={lineY} y2={lineY} {...LINES[l.kind]} />}
            <text x="50%" dx={l.x / 2} y={y - 4} textAnchor="middle">
              {l.label || priceText(l.price)}
            </text>
          </g>
        );
      })}
      <line x1="0" x2="100%" y1="319" y2="319" stroke="#66188f" strokeWidth="2" />
      <line x1="0" x2="100%" y1="416.500" y2="416.500" stroke="#000" strokeDasharray="4 4" />
      <text x="9" y="413">Clo M</text>
      <text x="100%" dx="-4" y="315" textAnchor="end">Clo 08h 29 127,0</text>
      <text x="1" y="863">IT-Finance.com - Temps Réel</text>
    </Plot>
  );
}

function ChartPrices() {
  return (
    <PriceAxis>
      <defs>
        <linearGradient id="gold" x2="0" y2="1">
          <stop offset="0" stopColor="#ffe21a" />
          <stop offset="1" stopColor="#f0b411" />
        </linearGradient>
      </defs>
      {PRICES.map((p) => {
        const y = priceY(p);
        const round = p % 100 === 0;
        return (
          <g key={p}>
            <path d={`M0 ${y + 0.5}h4`} stroke="#76909a" />
            <text x="6" y={y + 4} fontSize={round ? 12 : 11} fontWeight={round ? "bold" : "normal"}>
              {priceText(p)}
            </text>
          </g>
        );
      })}
      <rect x="5.500" y="415.500" width="45" height="15" fill="#eef1f2" stroke="#76909a" />
      <text x="6" y="428">29 083,3</text>
      <rect x="5" y="411" width="36" height="16" fill="#90ee90" />
      <text x="7" y="422">3m31s</text>
      <rect x="5.500" y="390.500" width="62" height="20" fill="url(#gold)" stroke="#8f8a5a" />
      <text x="6" y="406" fontSize="16">29 083,</text>
      <text x="60" y="403">3</text>
      <path d="M68.500 0v900" stroke="#9aa9b0" />
    </PriceAxis>
  );
}

function OrdersWindow() {
  const [tab, setTab] = useState("Exécutés");
  return (
    <Orders>
      <OrdersTitle>
        <OrdersCell $pad={3}><CandleLogo /></OrdersCell>
        <OrdersCell>Liste des ordres</OrdersCell>
        <OrdersCell $gap={4}>
          Ordres en attente <b>0</b>
          <Icon s={12}><path d="M1 1h18v18H1z" fill="#dfe3e4" stroke="#a9b0b3" /><path d="M4 4l12 12M16 4L4 16" stroke="#9aa1a4" strokeWidth="4" /></Icon>
        </OrdersCell>
        <OrdersCell $gap={3}>
          <Picker aria-label="Période"><option>Aujourd'hui</option></Picker>
          <Down s={6} />
        </OrdersCell>
        <FilterBox>
          <SearchInput aria-label="Filtre" defaultValue="jap" />
          <PlainButton aria-label="Effacer"><RedCross /></PlainButton>
        </FilterBox>
        <WindowButtons>
          Données indicatives
          <Icon s={12}><path d="M1 8c0-9 18-9 18 0 0 5-5 6-8 6l-2 5-1-5c-4 0-7-2-7-6z" fill="#27a3e8" stroke="#1d7fc0" /></Icon>
          <ShareGlyph c="#eef2f6" s={14} />
          <Minimize c="#47698f" />
          <Maximize c="#47698f" />
          <Close c="#47698f" />
        </WindowButtons>
      </OrdersTitle>
      <Tabs>
        {["Exécutés", "En attente", "Annulés/Rejetés", "Ordres liés", "Trading automatique", "Tous"].map((t) => (
          <Tab key={t} type="button" $on={t === tab} onClick={() => setTab(t)}>
            {t}
          </Tab>
        ))}
      </Tabs>
      <OrdersTable>
        <colgroup>
          {[18, 87, 93, 78, 75, 80, 72, 77, 76].map((w, i) => (
            <col key={i} width={w} />
          ))}
        </colgroup>
        <thead>
          <tr>
            <th><Pages /></th>
            <th>
              <DateHead>
                <Wrench c="#fff" f="#fff" s={12} />
                &nbsp; &nbsp;
                <Icon s={8} box={8}><path d="M1 2h6L4 6z" stroke="#fff" /></Icon>
                Date
              </DateHead>
            </th>
            <th>Nom</th>
            <th>Code</th>
            <th>Sens</th>
            <th>Type</th>
            <th>Qté</th>
            <th>Prix</th>
            <th>Gain</th>
          </tr>
        </thead>
        <tbody>
          <OrderRow $buy>
            <Centered><Pages /></Centered>
            <Centered>13:09:57</Centered>
            <Dark>Japon 225 Cash ...</Dark>
            <Dark>NIKKEI</Dark>
            <td>Achat</td>
            <td>Clôturer</td>
            <td><b>0,5</b></td>
            <td><b>29 136,8</b></td>
            <GainCell $on>10,52 €</GainCell>
          </OrderRow>
          <OrderRow>
            <Centered><Pages /></Centered>
            <Centered>11:00:59</Centered>
            <Dark>Japon 225 Cash ...</Dark>
            <Dark>NIKKEI</Dark>
            <td>Vente</td>
            <td>Au marché</td>
            <td><b>-0,5</b></td>
            <td><b>29 159,8</b></td>
            <GainCell />
          </OrderRow>
        </tbody>
      </OrdersTable>
    </Orders>
  );
}

function TradeTicket() {
  return (
    <Ticket>
      <TicketSide>
        <SideButton aria-label="Réglages du ticket"><Wrench /></SideButton>
        <SideButton $flat aria-label="Clavier">
          <Icon s={18}>
            <path d="M0 3h20v15H0z" fill="#8da0a9" stroke="none" />
            <path d="M2 7h16M2 11h16" stroke="#fff" strokeWidth="2" strokeDasharray="2 1" />
            <path d="M5 15h10" stroke="#fff" strokeWidth="2" />
          </Icon>
        </SideButton>
      </TicketSide>
      <Field>
        Qté
        <QtyInput defaultValue="0.5" />
      </Field>
      {["Limite", "Stop"].map((name) => (
        <OrderGroup key={name}>
          {name}
          <OrderButton aria-label={name}>
            <Icon s={24}>
              <path d="M6 1h8l4 4v6" stroke="#555" />
              <path d="M4 1v4H1l4 4 4-4H6V1z" fill="#e03030" stroke="none" transform={name === "Stop" ? "translate(0 10)" : undefined} />
              <path d="M4 19v-4H1l4-4 4 4H6v4z" fill="#21a02a" stroke="none" transform={name === "Stop" ? "translate(0 -10)" : undefined} />
              <path d="M9 11h10v4H9zM9 15h10v4H9z" fill="#fff" stroke="#555" />
            </Icon>
          </OrderButton>
        </OrderGroup>
      ))}
      <Deals>
        <Deal>
          Vendre
          <DealButton type="button">29 079,<small>8</small></DealButton>
        </Deal>
        <Deal>
          Acheter
          <DealButton type="button" $buy>29 086,<small>8</small></DealButton>
        </Deal>
      </Deals>
      <Guards>
        {[["L", "10"], ["S", "40"]].map(([name, pts]) => (
          <Guard key={name}>
            <label>
              <Tick type="checkbox" $s={12} $r={2} />
              {name}
            </label>
            <PtsInput aria-label={`Points ${name}`} defaultValue={pts} />
            pts
          </Guard>
        ))}
      </Guards>
    </Ticket>
  );
}

function App() {
  const [tool, setTool] = useState("Pointeur");
  return (
    <Screen>
      <GlobalStyle />
      <Bar as="header" $h={26} $top>
        <Logo>
          <CandleLogo s={17} />
          <div>
            <Brand>ProRealTime</Brand>
            Complete
          </div>
        </Logo>
        <Menu>
          {["Fichier", "Affichage", "Trading", "Objets", "Réglages", "Aide"].map((m) => (
            <MenuItem key={m} type="button">{m}</MenuItem>
          ))}
        </Menu>
        <Cell $pad={3}><Chain /></Cell>
        <Search>
          <SearchInput aria-label="Recherche" placeholder="Recherche ..." />
          <Icon s={16}><circle cx="12" cy="7" r="6" strokeWidth="1.500" /><path d="M8 12l-7 7" strokeWidth="2.500" /></Icon>
        </Search>
        <Push />
        <CellButton $pad={3} $bg="#8ea5b0" aria-label="Dessin"><DrawIcon /></CellButton>
        <CellButton $pad={3} aria-label="Drapeau"><Flag /></CellButton>
        <CellButton $pad={5}>3 écrans 8 indices 5 mn</CellButton>
        <CellButton $pad={3} $gap={4}>
          <Icon s={10} h={16} box={16}><path d="M0-4h16v8H0zM0 4h16v8H0zM0 12h16v8H0z" fill="#4fce5a" stroke="#40606b" /></Icon>
          Push+
        </CellButton>
        <CellButton $pad={4} $gap={4}>
          <Icon s={10}><path d="M1 1h18v18H1z" fill="#7fe58a" stroke="#40606b" strokeWidth="2" /></Icon>
          DealThru
        </CellButton>
        <PlainButton $w={20} aria-label="Réglages"><Icon s={13}><path d="M1 1h18v18H1z" stroke="#5d7580" strokeDasharray="2 2" /><path d="M5 16l6-6c-1-3 2-6 4-5l-2 2 1 2 2-1c1 3-2 4-4 3l-5 6z" fill="#5d7580" stroke="none" /></Icon></PlainButton>
        <PlainButton $w={14} aria-label="Épingler"><Icon s={12}><path d="M1 10h6" stroke="#5d7580" strokeWidth="2" /><path d="M7 4v12l3-3h5v3h3V4h-3v3h-5z" fill="#5d7580" stroke="none" /></Icon></PlainButton>
        <PlainButton aria-label="Réduire"><Minimize /></PlainButton>
        <PlainButton $w={20} aria-label="Fermer"><Close /></PlainButton>
      </Bar>

      <Tools $h={32} $line={2}>
        {TOOLS.map(([name, icon]) => (
          <ToolButton key={name} type="button" aria-label={name} $on={name === tool} onClick={() => setTool(name)}>
            {icon}
          </ToolButton>
        ))}
      </Tools>

      <Bar $h={25}>
        <Cell $pad={2}><CandleLogo s={18} /></Cell>
        <Cell $pad={3}><Chain /></Cell>
        <Cell $pad={4} $gap={4}>
          <Picker $bold aria-label="Valeur"><option>NIKKEI</option></Picker>
          <Down />
        </Cell>
        <Cell $gap={6}>
          <Picker $bold aria-label="Unité de temps"><option>5 minutes</option></Picker>
          <Down />
        </Cell>
        <Cell $gap={5}>
          <Picker aria-label="Historique"><option>400 unités</option></Picker>
          <Down />
        </Cell>
        <Quote>
          <Icon s={12}>
            <path d="M1 1h18v18H1z" fill="#f6f8f9" stroke="#8ea0a8" strokeWidth="2" />
            <path d="M10 4v3M10 9v8M7 9h3M7 16h6" stroke="#8593a0" strokeWidth="2" />
          </Icon>
          <b>29 083,3 (+0,09 % +27,5)</b>
          <Dot />
          Japon 225 Cash (1$)
        </Quote>
        <Push />
        <CellButton $pad={2} $bg="#fff" aria-label="Synchroniser">
          <Icon s={19}>
            <path d="M9 2C4 2 3 6 4 11" stroke="#e33b3b" strokeWidth="3" />
            <path d="M0 9l5 6 4-6z" fill="#e33b3b" stroke="none" />
            <path d="M10 18c5 0 6-4 5-9" stroke="#21a02a" strokeWidth="3" />
            <path d="M11 11l4-6 5 6z" fill="#21a02a" stroke="none" />
          </Icon>
        </CellButton>
        <PlainButton $w={21} aria-label="Réduire"><Minimize /></PlainButton>
        <PlainButton $w={12} aria-label="Agrandir"><Maximize /></PlainButton>
        <PlainButton $w={20} aria-label="Fermer"><Close /></PlainButton>
      </Bar>

      <Info>
        <Stats>
          <Stat $gap={11}>Gain latent : <b>0,00 €</b></Stat>
          <Stat>Gain Jour : <Green>10,52 €</Green></Stat>
          <Stat>
            Trades jour :
            <span><Green>1</Green> / <b>0</b> / <DarkRed>0</DarkRed></span>
          </Stat>
          <Stat $gap={2}>
            Position : &nbsp; &nbsp; <b>0</b>
            <RedCross s={13} dim />
            &nbsp; <span>/ <b>0</b></span>
            <Icon s={15}>
              <circle cx="7" cy="7" r="4" stroke="#1b62bd" strokeWidth="3.500" />
              <circle cx="7" cy="7" r="6" stroke="#1b62bd" strokeWidth="2" strokeDasharray="2.500 2" />
              <circle cx="15.500" cy="15.500" r="3" stroke="#1b62bd" strokeWidth="2" />
            </Icon>
          </Stat>
        </Stats>
        <TradeTicket />
      </Info>

      <Chart>
        <ChartPlot />
        <ChartPrices />
        <TimeAxis>
          {HOURS.map((t) => (
            <g key={t.x}>
              <path d={`M${t.x + 0.5} 0v3`} stroke="#76909a" />
              <text x={t.x} y="14" textAnchor="middle">{t.label}</text>
            </g>
          ))}
          {DAYS.map((t) => (
            <g key={t.x}>
              <path d={`M${t.x + 0.5} 0v3`} stroke="#76909a" />
              <text x={t.x} y="14" textAnchor="middle" fontSize="12" fontWeight="bold">{t.label}</text>
            </g>
          ))}
        </TimeAxis>
        <Overlay>
          <Strip>
            <StripButton aria-label="Descendre"><Icon s={14}><path d="M1 1h14l4 4v14H1z" fill="#fff" stroke="#8195a0" /><path d="M8 4h4v6h4l-6 6-6-6h4z" fill="#e03c3c" stroke="none" /></Icon></StripButton>
            <StripButton aria-label="Monter"><Icon s={14}><path d="M1 1h14l4 4v14H1z" fill="#fff" stroke="#8195a0" /><path d="M8 16h4v-6h4l-6-6-6 6h4z" fill="#2aa832" stroke="none" /></Icon></StripButton>
            <StripItem><Swatch $c="linear-gradient(90deg, #1b9ad0 50%, #ff6b6b 50%)" />Prix</StripItem>
            <StripItem><Swatch $c="#000" />Clôture (M)</StripItem>
            {INDICATORS.map((name) => (
              <StripItem key={name}>
                <Tick type="checkbox" $s={10} />
                {name}
              </StripItem>
            ))}
          </Strip>
          <DayRange>Jour :+Haut 29 193,3 +Bas 29 023,3</DayRange>
        </Overlay>
        <OrdersWindow />
      </Chart>

      <BottomBar $h={26}>
        <CellButton $pad={5} aria-label="Dessin"><DrawIcon /></CellButton>
        <CellButton $pad={4} aria-label="Options de dessin"><Down /></CellButton>
        <CellButton $pad={4} $bg="#fff" aria-label="Indicateurs">
          <Icon s={20}>
            <path d="M1 5c5-6 8 8 18 2" stroke="#21a02a" strokeWidth="1.500" />
            <path d="M1 9c6-8 10 4 18-6" stroke="#d33" strokeWidth="1.500" />
            <path d="M1 19v-4h4v2h4v-4h4v3h2v-4h4v7z" fill="#25b52d" stroke="#b33" />
          </Icon>
        </CellButton>
        <CellButton $pad={3} $bg="#fff" aria-label="Options des indicateurs"><Down /></CellButton>
        <Share type="button"><ShareGlyph s={15} />Partager</Share>
        <ToolButton aria-label="Messages"><Icon s={18}><path d="M2 1h9l4 4v8H2z" fill="#fff" stroke="#789" /><path d="M6 7h13v9h-4l-3 3v-3H6z" fill="#3b78d8" stroke="#2256ab" /><path d="M8 11.500h9" stroke="#fff" strokeWidth="2" strokeDasharray="2 1" /></Icon></ToolButton>
        <ToolButton aria-label="Journal"><Icon s={17}><path d="M3 1h14v18H3z" fill="#fff" /><path d="M5 5h10M5 8h10M5 11h10M5 14h10" /><path d="M3 1h9l-9 4zM17 19H7l10-5z" fill="#d44" stroke="none" /></Icon></ToolButton>
        <ToolButton aria-label="Carnet"><Icon s={18}><path d="M1 2h9v4H1zM4 6h6v4H4zM2 10h8v4H2zM1 14h9v4H1z" fill="#25c534" stroke="#0e7a18" /><path d="M10 2h6v4h-6zM10 6h9v4h-9zM10 10h6v4h-6zM10 14h8v4h-8z" fill="#ef5a5a" stroke="#a92222" /></Icon></ToolButton>
        <ToolButton aria-label="Fenêtres"><Icon s={19}><path d="M1 1h13v11H1z" fill="#fff" stroke="#174f9c" strokeWidth="1.500" /><path d="M1 2h13M6 8h13" stroke="#174f9c" strokeWidth="2" /><path d="M6 7h13v12H6z" fill="#fff" stroke="#174f9c" strokeWidth="1.500" /><path d="M8 16l3-4 3 3 3-4" stroke="#d33" /></Icon></ToolButton>
        <ToolButton aria-label="Réglages du graphique"><Icon s={19}><path d="M2 9h7v8H2z" fill="#e55" stroke="#922" /><path d="M12 2h6v15h-6zM15 0v20" fill="#3c4" stroke="#171" /><path d="M4 18l6-6c-1-4 3-6 5-5l-3 3 2 2 3-2c0 4-3 5-5 4l-6 6z" fill="#fff" /></Icon></ToolButton>
        <PlainButton $w={12} aria-label="Replier"><Icon s={12}><path d="M9 3L2 10l7 7M17 3l-7 7 7 7" stroke="#333" strokeWidth="1.500" /></Icon></PlainButton>
        <Scroll>
          <ScrollButton aria-label="Défiler à gauche"><Icon s={8} box={8}><path d="M6 0v8L2 4z" fill="#000" stroke="none" /></Icon></ScrollButton>
          <Track><Thumb /></Track>
          <ScrollButton $end aria-label="Défiler à droite"><Icon s={8} box={8}><path d="M2 0v8l4-4z" fill="#000" stroke="none" /></Icon></ScrollButton>
        </Scroll>
        <ToolButton aria-label="Ajuster"><ZoomIcon fill="#cfcfcf"><path d="M17 1v10M15 3l2-2 2 2M15 9l2 2 2-2M1 17h8M3 15l-2 2 2 2M7 15l2 2-2 2" stroke="#0000e6" /></ZoomIcon></ToolButton>
        <ToolButton aria-label="Zoom arrière"><ZoomIcon><path d="M5 7.500h6" stroke="#0000e6" strokeWidth="2" /></ZoomIcon></ToolButton>
        <ToolButton aria-label="Zoom avant"><ZoomIcon><path d="M5 7.500h6M8 4.500v6" stroke="#0000e6" strokeWidth="2" /></ZoomIcon></ToolButton>
        <ToolButton aria-label="Masquer la barre"><Icon s={19}><path d="M0 2h20v6H0z" fill="#fff" stroke="#667" /><path d="M2 5h16" strokeWidth="3" strokeDasharray="3 1" /><path d="M8 10h4v4h3l-5 5-5-5h3z" fill="#1f5fc4" stroke="none" /></Icon></ToolButton>
      </BottomBar>

      <Taskbar>
        {TASKS.map(([name, icon, state]) => (
          <TaskButton key={name} type="button" aria-label={name} $on={state === "on"} $open={state === "open"}>
            {icon}
          </TaskButton>
        ))}
        <Push />
        <Clock>
          13:51
          <br />
          11/05/2023
        </Clock>
      </Taskbar>
    </Screen>
  );
}

export default App;
